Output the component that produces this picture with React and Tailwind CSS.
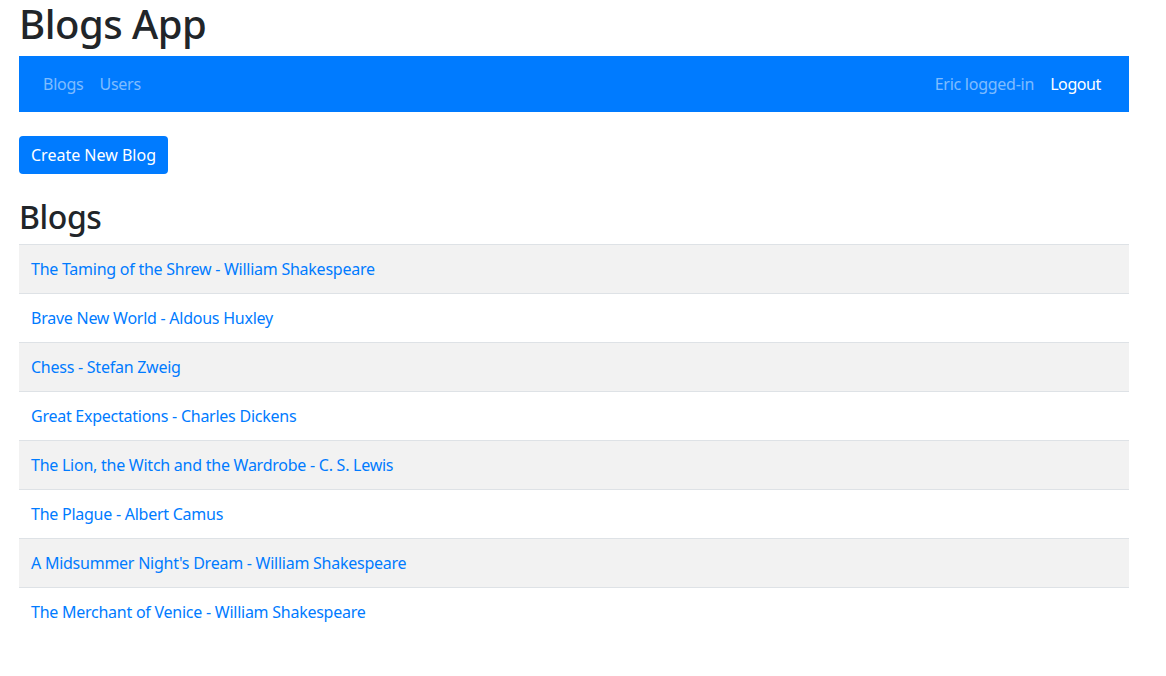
const blogs = [
  "The Taming of the Shrew - William Shakespeare",
  "Brave New World - Aldous Huxley",
  "Chess - Stefan Zweig",
  "Great Expectations - Charles Dickens",
  "The Lion, the Witch and the Wardrobe - C. S. Lewis",
  "The Plague - Albert Camus",
  "A Midsummer Night's Dream - William Shakespeare",
  "The Merchant of Venice - William Shakespeare",
];

const NavBar = () => (
  <nav className="flex h-14 items-center justify-between bg-[#007bff] pl-4 pr-[20px]">
    <div className="flex">
      <a href="#" className="px-2 py-2 leading-6 text-white/50">Blogs</a>
      <a href="#" className="px-2 py-2 leading-6 text-white/50">Users</a>
    </div>
    <div className="flex items-center">
      <span className="px-2 py-2 leading-6 text-white/50">Eric logged-in</span>
      <a href="#" className="px-2 py-2 leading-6 tracking-[-0.4px] text-white">Logout</a>
    </div>
  </nav>
);

const App = () => {
  return (
    <div
      className="min-h-screen bg-white text-base tracking-[-0.25px] text-[#212529]"
      style={{ fontFamily: '"Noto Sans", "Open Sans", sans-serif' }}
    >
      <div className="mx-[19px] w-[1110px]">
        <h1 className="mb-2 text-[40px] font-medium leading-[48px] tracking-[-0.5px]">Blogs App</h1>
        <NavBar />

        <button className="mt-6 rounded bg-[#007bff] px-3 py-[7px] leading-6 tracking-normal text-white">
          Create New Blog
        </button>

        <h2 className="mt-6 mb-2 text-[32px] font-medium leading-[38px] tracking-[-0.4px]">Blogs</h2>

        <table className="w-full border-collapse">
          <tbody>
            {blogs.map((title, i) => (
              <tr key={title} className={i % 2 === 0 ? "bg-[#f2f2f2]" : ""}>
                <td className="border-t border-[#dee2e6] p-3 leading-6">
                  <a href="#" className="text-[#007bff]">{title}</a>
                </td>
              </tr>
            ))}
          </tbody>
        </table>
      </div>
    </div>
  );
};

export default App;
